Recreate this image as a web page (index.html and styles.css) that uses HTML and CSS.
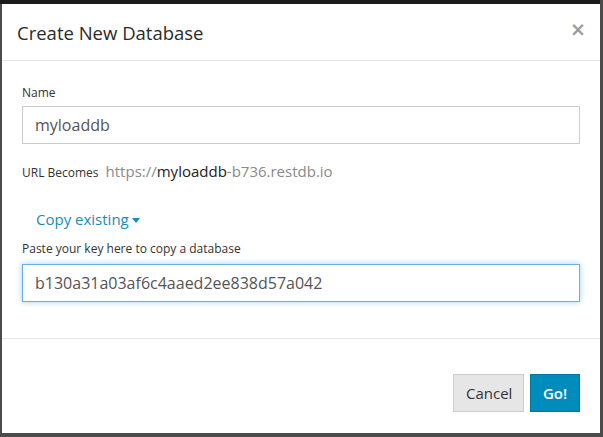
FILE: index.html
```html
<!DOCTYPE html>
<html>
<head>
<meta charset="utf-8">
<link rel="stylesheet" href="styles.css">
</head>
<body>
<div class="backdrop">
  <div class="modal">
    <div class="modal-header">
      <h4 class="modal-title">Create New Database</h4>
      <span class="close">&times;</span>
    </div>
    <div class="modal-body">
      <label class="field-label">Name</label>
      <div class="input">myloaddb</div>
      <div class="url-row">
        <span class="url-label">URL Becomes</span>
        <span class="url"><span class="muted">https://</span><span class="strong">myloaddb</span><span class="muted">-b736.restdb.io</span></span>
      </div>
      <div class="copy-link">Copy existing <span class="caret"></span></div>
      <label class="field-label key-label">Paste your key here to copy a database</label>
      <div class="input focused">b130a31a03af6c4aaed2ee838d57a042</div>
    </div>
    <div class="modal-footer">
      <button class="btn btn-default">Cancel</button>
      <button class="btn btn-primary">Go!</button>
    </div>
  </div>
</div>
</body>
</html>
```
FILE: styles.css
```css
html, body {
  margin: 0;
  padding: 0;
  height: 100%;
}
body {
  background: #4b4b4b;
  font-family: "Open Sans", "Liberation Sans", sans-serif;
  color: #333;
}
.backdrop {
  border-top: 4px solid #1b1b1b;
  padding-left: 2px;
  width: 598px;
}
.modal {
  background: #fff;
  height: 429px;
  display: flex;
  flex-direction: column;
}
.modal-header {
  border-bottom: 1px solid #e5e5e5;
  display: flex;
  align-items: center;
  justify-content: space-between;
  padding: 0 14px 0 15px;
  box-sizing: border-box;
  flex: none;
  height: 57px;
}
.modal-title {
  margin: 0;
  font-size: 18.5px;
  font-weight: 400;
  color: #2b2b2b;
  padding-top: 1px;
}
.close {
  font-family: "DejaVu Sans", sans-serif;
  font-size: 19px;
  font-weight: bold;
  color: #9d9d9d;
  margin-top: -7px;
}
.modal-body {
  padding: 23px 20px 36px 20px;
  border-bottom: 1px solid #e5e5e5;
  flex: none;
}
.field-label {
  display: block;
  font-size: 12px;
  line-height: 17px;
  margin-bottom: 5px;
  color: #333;
}
.input {
  height: 38px;
  box-sizing: border-box;
  border: 1px solid #ccc;
  padding: 0 12px;
  font-size: 16px;
  line-height: 36px;
  color: #555;
}
.input.focused {
  border-color: #66afe9;
  box-shadow: 0 0 6px rgba(102, 175, 233, 0.6);
}
.url-row {
  margin-top: 17px;
  height: 20px;
  line-height: 20px;
  display: flex;
  align-items: baseline;
}
.url-label {
  font-size: 12px;
  margin-right: 7px;
  color: #333;
}
.url {
  font-size: 15px;
}
.muted {
  color: #8a8a8a;
}
.strong {
  color: #222;
}
.copy-link {
  margin-top: 28px;
  padding-left: 14px;
  font-size: 15px;
  line-height: 20px;
  color: #1b8bbd;
}
.caret {
  display: inline-block;
  width: 0;
  height: 0;
  border-left: 4px solid transparent;
  border-right: 4px solid transparent;
  border-top: 5px solid #1b8bbd;
  vertical-align: middle;
  margin-left: -1px;
}
.key-label {
  margin-top: 11px;
  margin-bottom: 7px;
}
.modal-footer {
  flex: 1;
  display: flex;
  justify-content: flex-end;
  align-items: flex-start;
  padding: 35px 20px 0 0;
  gap: 6px;
}
.btn {
  height: 38px;
  font-family: "Open Sans", "Liberation Sans", sans-serif;
  font-size: 15px;
  padding: 0 12px;
  border: 1px solid #ccc;
  box-sizing: border-box;
}
.btn-default {
  background: #e6e6e6;
  color: #333;
  width: 71px;
}
.btn-primary {
  background: #008cba;
  border-color: #0079a1;
  color: #fff;
  font-weight: 600;
  width: 50px;
  padding: 0;
}
```
